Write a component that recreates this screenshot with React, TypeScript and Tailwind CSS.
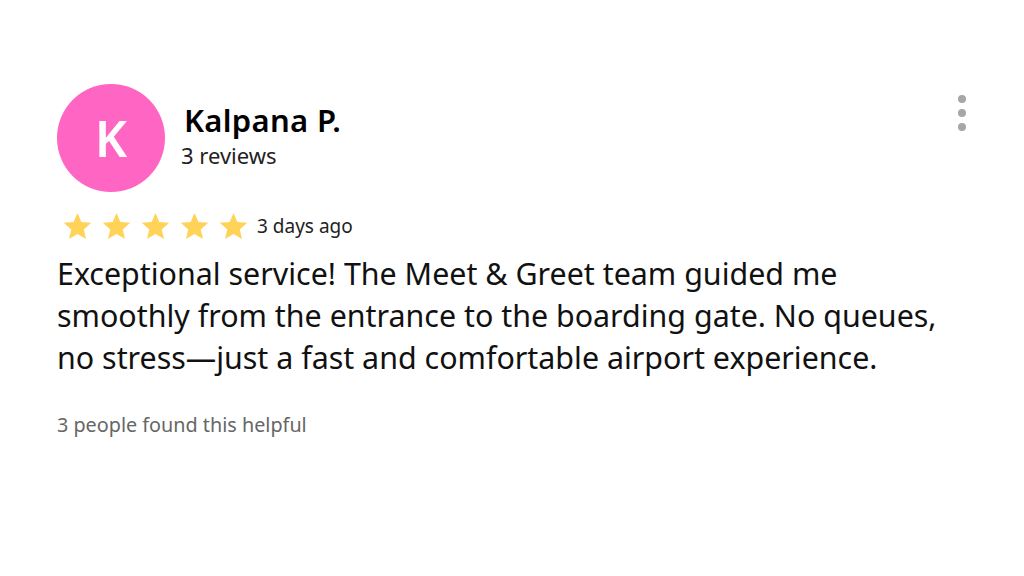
import React from 'react';

const Star: React.FC = () => (
    <svg width="31" height="30" viewBox="0 0 24 24" className="shrink-0">
        <path d="M12 1.5l3.09 7.26 7.91.72-6 5.22 1.8 7.75L12 18.35 5.2 22.45 7 14.7 1 9.48l7.91-.72z" fill="#ffd358" />
    </svg>
);

const App: React.FC = () => {
    const stars = [0, 1, 2, 3, 4];

    return (
        <div className="w-[1024px] h-[576px] bg-white font-['Noto_Sans',sans-serif] text-black">
            <div className="pl-[57px] pr-[58px] pt-[84px]">
                {/* HEADER */}
                <div className="flex justify-between items-start">
                    <div className="flex items-start">
                        <div className="w-[108px] h-[108px] rounded-full bg-[#ff66c4] flex items-center justify-center text-white text-[50px] font-semibold">
                            K
                        </div>
                        <div className="ml-[16px] pt-[17px] flex flex-col">
                            <span className="text-[31px] font-semibold leading-[38px] ml-[3px] tracking-[0.3px]">Kalpana P.</span>
                            <span className="text-[22px] leading-[30px] mt-[1px] text-[#222]">3 reviews</span>
                        </div>
                    </div>
                    <div className="flex flex-col gap-[6px] pt-[11px]">
                        <span className="w-[8px] h-[8px] rounded-full bg-[#a6a6a6]" />
                        <span className="w-[8px] h-[8px] rounded-full bg-[#a6a6a6]" />
                        <span className="w-[8px] h-[8px] rounded-full bg-[#a6a6a6]" />
                    </div>
                </div>

                {/* RATING */}
                <div className="flex items-center mt-[19px] ml-[5px]">
                    <div className="flex gap-[8px]">
                        {stars.map(i => <Star key={i} />)}
                    </div>
                    <span className="ml-[8px] text-[19px] text-[#222]">3 days ago</span>
                </div>

                {/* BODY */}
                <p className="mt-[12px] text-[30.4px] leading-[42px] text-[#111] whitespace-nowrap">
                    Exceptional service! The Meet &amp; Greet team guided me<br />
                    smoothly from the entrance to the boarding gate. No queues,<br />
                    no stress—just a fast and comfortable airport experience.
                </p>

                <p className="mt-[31px] text-[19.8px] text-[#666]">3 people found this helpful</p>
            </div>
        </div>
    );
};

export default App;
